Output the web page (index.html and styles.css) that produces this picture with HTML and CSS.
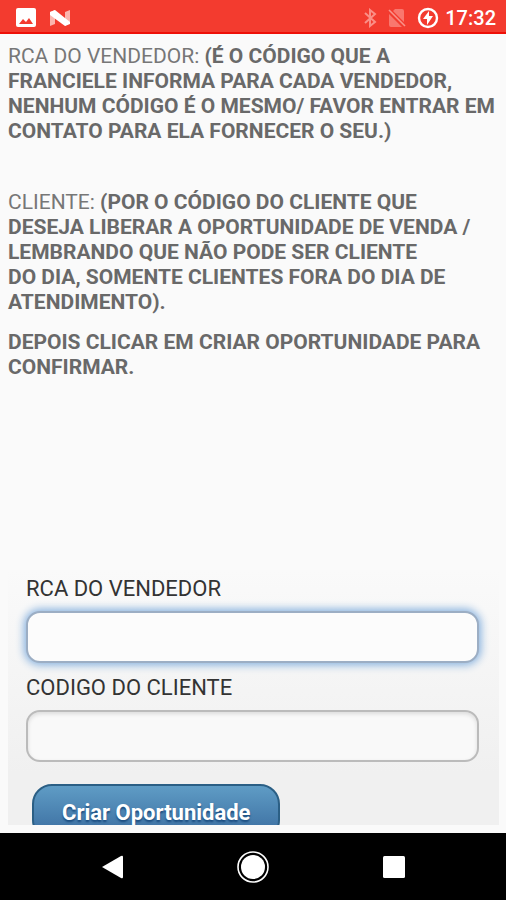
FILE: index.html
```html
<!DOCTYPE html>
<html lang="pt-BR">
<head>
    <meta charset="UTF-8">
    <meta name="viewport" content="width=device-width, initial-scale=1.0">
    <title>Criar Oportunidade</title>
    <link rel="stylesheet" href="styles.css">
</head>
<body>
    <header class="status-bar">
        <div class="status-left">
            <svg width="20" height="20" viewBox="0 0 20 20">
                <rect width="20" height="19" rx="2" fill="#fff"/>
                <path d="M3 16 L7 11 L10 14 L13 10 L17 16 Z" fill="#f33b2f"/>
            </svg>
            <svg width="22" height="18" viewBox="0 0 22 18">
                <path d="M1 3 L6 1 V15 L1 17 Z M16 3 L21 1 V14 L16 17 Z" fill="#fbb5ae"/>
                <path d="M1 3 L6 1 L21 13 V15 L16 17 L1 6 Z" fill="#fff"/>
            </svg>
        </div>
        <div class="status-right">
            <svg width="14" height="20" viewBox="0 0 14 20">
                <path d="M2 5 L12 14 L7 18 V2 L12 6 L2 15" fill="none" stroke="#fa8f87" stroke-width="2"/>
            </svg>
            <svg width="18" height="20" viewBox="0 0 18 20">
                <path d="M7 1 H14 Q16 1 16 3 V14 L5 3 Z M1 6 L14 19 H3 Q1 19 1 17 Z" fill="#f9776e"/>
                <path d="M1 2 L17 18" stroke="#f9938b" stroke-width="1.6"/>
            </svg>
            <svg width="22" height="22" viewBox="0 0 22 22">
                <circle cx="11" cy="11" r="9" fill="none" stroke="#fff" stroke-width="2.4"/>
                <path d="M12 4 L6 12 H10 V18 L16 9 H12 Z" fill="#fff"/>
            </svg>
            <span class="clock">17:32</span>
        </div>
    </header>

    <main class="content">
        <div class="instructions">
            <p>RCA DO VENDEDOR: <strong>(É O CÓDIGO QUE A FRANCIELE INFORMA PARA CADA VENDEDOR, NENHUM CÓDIGO É O MESMO/ FAVOR ENTRAR EM CONTATO PARA ELA FORNECER O SEU.)</strong></p>
            <p class="cliente">CLIENTE: <strong>(POR O CÓDIGO DO CLIENTE QUE DESEJA&nbsp;LIBERAR A OPORTUNIDADE DE VENDA / LEMBRANDO QUE NÃO PODE SER CLIENTE DO&nbsp;DIA,&nbsp;SOMENTE CLIENTES FORA DO DIA DE ATENDIMENTO).</strong></p>
            <p><strong>DEPOIS CLICAR EM CRIAR OPORTUNIDADE PARA CONFIRMAR.</strong></p>
        </div>

        <form class="panel">
            <label for="rca">RCA DO VENDEDOR</label>
            <input class="active" type="text" id="rca">
            <label for="codigo">CODIGO DO CLIENTE</label>
            <input type="text" id="codigo">
            <button type="button">Criar Oportunidade</button>
        </form>
    </main>

    <nav class="nav-bar">
        <button type="button" aria-label="Voltar">
            <svg width="32" height="32" viewBox="0 0 32 32">
                <path d="M5 16 L24 5 Q26 4 26 6 V26 Q26 28 24 27 Z" fill="#fff"/>
            </svg>
        </button>
        <button type="button" aria-label="Início">
            <svg width="32" height="32" viewBox="0 0 32 32">
                <circle cx="16" cy="16" r="15" fill="none" stroke="#fff" stroke-width="1.6"/>
                <circle cx="16" cy="16" r="12" fill="#fff"/>
            </svg>
        </button>
        <button type="button" aria-label="Recentes">
            <svg width="32" height="32" viewBox="0 0 32 32">
                <rect x="6" y="5" width="22" height="22" rx="1.5" fill="#fff"/>
            </svg>
        </button>
    </nav>
</body>
</html>
```
FILE: styles.css
```css
* {
    margin: 0;
    padding: 0;
    box-sizing: border-box;
    font-family: Roboto, 'Liberation Sans', sans-serif;
}

body {
    display: flex;
    flex-direction: column;
    height: 100vh;
    background: #fafafa;
    overflow: hidden;
}

svg {
    display: block;
}

.status-bar {
    display: flex;
    justify-content: space-between;
    align-items: center;
    height: 34px;
    padding: 3px 10px 0 16px;
    background: #f33b2f;
    border-bottom: 2px solid #ee1008;
}

.status-left {
    display: flex;
    align-items: center;
    gap: 13px;
}

.status-right {
    display: flex;
    align-items: center;
    gap: 11px;
}

.clock {
    margin-left: -5px;
    color: #fff;
    font-size: 20px;
    font-weight: 500;
}

.content {
    flex: 1;
    min-height: 0;
    display: flex;
    flex-direction: column;
    justify-content: space-between;
    padding: 10px 7px 8px 8px;
}

.instructions {
    color: #777;
    font-size: 21px;
    line-height: 25px;
}

.instructions p {
    margin-bottom: 15px;
}

.instructions strong {
    color: #696969;
    font-weight: 700;
}

.instructions .cliente {
    margin-top: 46px;
}

.panel {
    flex-shrink: 0;
    height: 256px;
    padding: 7px 20px 0 18px;
    background: linear-gradient(#fafafa, #f0f0f0 80%);
    overflow: hidden;
}

.panel label {
    display: block;
    color: #333;
    font-size: 22px;
    line-height: 25px;
}

.panel input {
    display: block;
    width: 100%;
    height: 52px;
    margin: 10px 0 12px;
    padding: 0 12px;
    border: 2px solid #bbb;
    border-radius: 14px;
    background: #f9f9f9;
    box-shadow: inset 0 2px 4px rgba(0, 0, 0, 0.12);
    font-size: 21px;
    outline: none;
}

.panel input.active {
    border: 2px solid #9caec4;
    background: #fcfcfc;
    box-shadow: 0 0 8px 2px #85b0de;
}

.panel button {
    height: 56px;
    margin: 10px 0 0 6px;
    padding: 0 28px;
    border: 2px solid #2b5f85;
    border-radius: 20px;
    background: linear-gradient(#5f9cc5, #396b9e);
    color: #fff;
    font-size: 22px;
    font-weight: 700;
    text-shadow: 0 2px 2px #194b7e;
}

.nav-bar {
    display: flex;
    justify-content: center;
    align-items: center;
    gap: 108px;
    height: 67px;
    background: #000;
}

.nav-bar button {
    border: none;
    background: none;
}
```
